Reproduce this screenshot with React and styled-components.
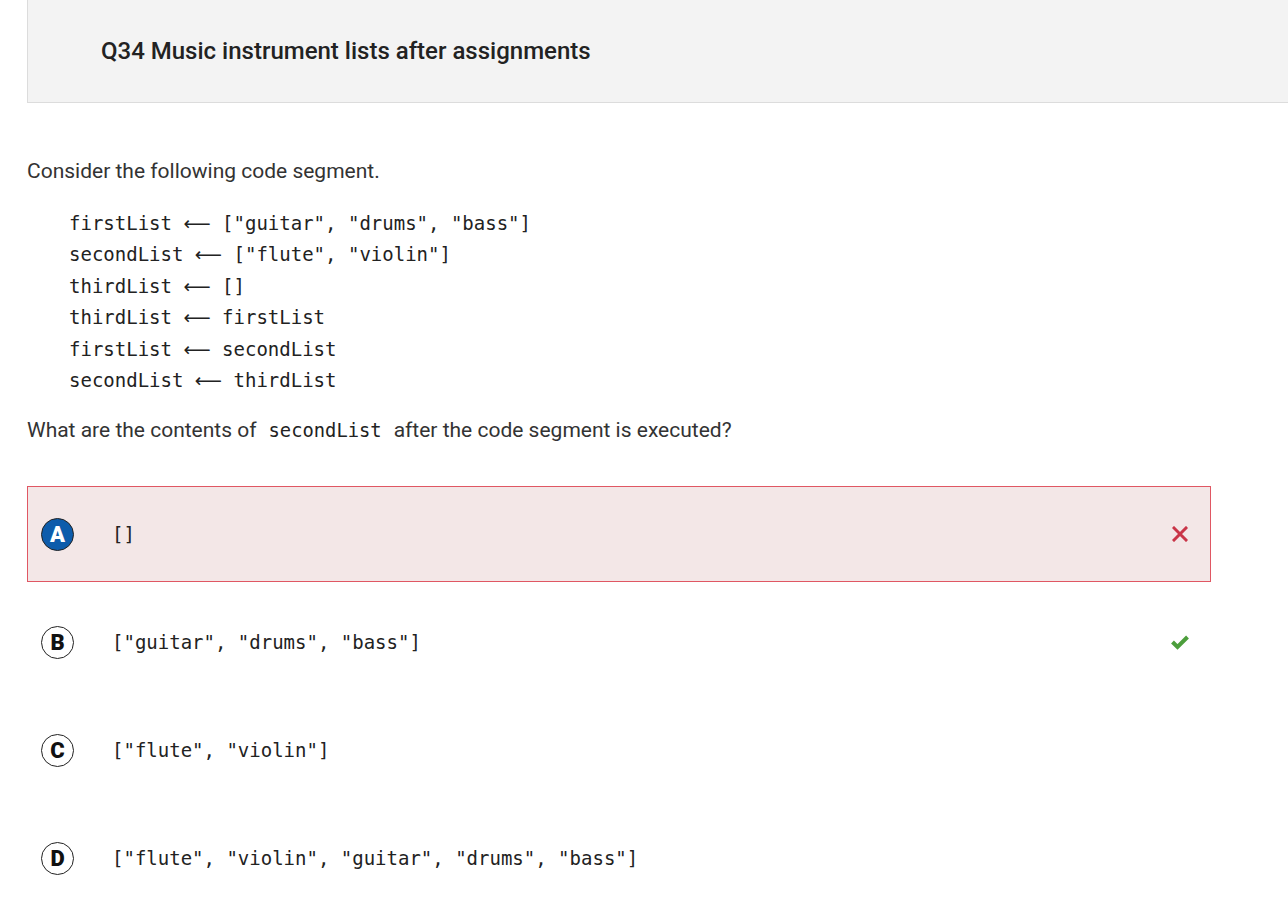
import React from 'react'
import styled, {createGlobalStyle} from 'styled-components'

const GlobalStyle = createGlobalStyle`
  body {
    margin: 0;
    background: #ffffff;
    font-family: Roboto, "Liberation Sans", sans-serif;
    color: #333333;
  }
`

const Page = styled.div`
  padding-left: 27px;
`

const Header = styled.header`
  display: flex;
  align-items: center;
  height: 102px;
  padding-left: 73px;
  background: #f3f3f3;
  border-left: 1px solid #dcdcdc;
  border-bottom: 1px solid #dcdcdc;
`

const Title = styled.h1`
  margin: 0;
  font-size: 24px;
  font-weight: 500;
  color: #222222;
`

const Prompt = styled.p`
  margin: 54px 0 0;
  font-size: 21px;
  line-height: 28px;
  color: #333333;
`

const CodeBlock = styled.div`
  margin: 23px 0 0 42px;
  font-family: "DejaVu Sans Mono", "Liberation Mono", monospace;
  font-size: 19px;
  color: #222222;
  white-space: pre;
`

const CodeLine = styled.div`
  height: 31.4px;
  line-height: 31.4px;
`

const Arrow = styled.span`
  font-family: "DejaVu Sans", sans-serif;
  font-size: 19px;
  line-height: 1;
`

const Question = styled.p`
  margin: 20px 0 0;
  font-size: 21px;
  line-height: 28px;
  color: #333333;
`

const InlineCode = styled.code`
  font-family: "DejaVu Sans Mono", "Liberation Mono", monospace;
  font-size: 18.8px;
  color: #222222;
  padding: 0 12px 0 12px;
`

const Options = styled.ul`
  list-style: none;
  margin: 41px 0 0;
  padding: 0;
  width: 1184px;
  display: flex;
  flex-direction: column;
  gap: 12px;
`

const Option = styled.li`
  display: flex;
  align-items: center;
  height: 94px;
  padding: 0 20px 0 13px;
  border: 1px solid ${p => (p.$wrong ? '#e05763' : 'transparent')};
  background: ${p => (p.$wrong ? '#f3e7e7' : 'transparent')};
`

const Letter = styled.span`
  flex: none;
  display: flex;
  align-items: center;
  justify-content: center;
  width: 31px;
  height: 31px;
  border-radius: 50%;
  border: 1px solid #222222;
  background: ${p => (p.$selected ? '#0d5cab' : '#ffffff')};
  color: ${p => (p.$selected ? '#ffffff' : '#111111')};
  font-family: Roboto, "Liberation Sans", sans-serif;
  font-weight: 900;
  font-size: 22px;
`

const AnswerText = styled.span`
  flex: 1;
  margin-left: 38px;
  font-family: "DejaVu Sans Mono", "Liberation Mono", monospace;
  font-size: 19px;
  color: #222222;
  white-space: pre;
`

const Mark = styled.span`
  flex: none;
  display: flex;
  width: 20px;
  justify-content: center;
`

function CrossIcon() {
  return (
    <svg width="16" height="16" viewBox="0 0 16 16">
      <path d="M2 2 L14 14 M14 2 L2 14" stroke="#c93548" strokeWidth="3" strokeLinecap="square" />
    </svg>
  )
}

function CheckIcon() {
  return (
    <svg width="20" height="16" viewBox="0 0 20 16">
      <path d="M2.5 8 L7.5 13 L17.5 3" fill="none" stroke="#4c9e3c" strokeWidth="4" />
    </svg>
  )
}

const codeLines = [
  ['firstList', '["guitar", "drums", "bass"]'],
  ['secondList', '["flute", "violin"]'],
  ['thirdList', '[]'],
  ['thirdList', 'firstList'],
  ['firstList', 'secondList'],
  ['secondList', 'thirdList'],
]

const answers = [
  {letter: 'A', text: '[]', selected: true, mark: 'wrong'},
  {letter: 'B', text: '["guitar", "drums", "bass"]', mark: 'right'},
  {letter: 'C', text: '["flute", "violin"]'},
  {letter: 'D', text: '["flute", "violin", "guitar", "drums", "bass"]'},
]

function App() {
  return (
    <>
      <GlobalStyle />
      <Page>
        <Header>
          <Title>Q34 Music instrument lists after assignments</Title>
        </Header>
        <Prompt>Consider the following code segment.</Prompt>
        <CodeBlock>
          {codeLines.map(([left, right], i) => (
            <CodeLine key={i}>
              {left} <Arrow>⟵</Arrow> {right}
            </CodeLine>
          ))}
        </CodeBlock>
        <Question>
          What are the contents of<InlineCode>secondList</InlineCode>after the code segment is executed?
        </Question>
        <Options>
          {answers.map(a => (
            <Option key={a.letter} $wrong={a.mark === 'wrong'}>
              <Letter $selected={a.selected}>{a.letter}</Letter>
              <AnswerText>{a.text}</AnswerText>
              <Mark>
                {a.mark === 'wrong' && <CrossIcon />}
                {a.mark === 'right' && <CheckIcon />}
              </Mark>
            </Option>
          ))}
        </Options>
      </Page>
    </>
  )
}

export default App
